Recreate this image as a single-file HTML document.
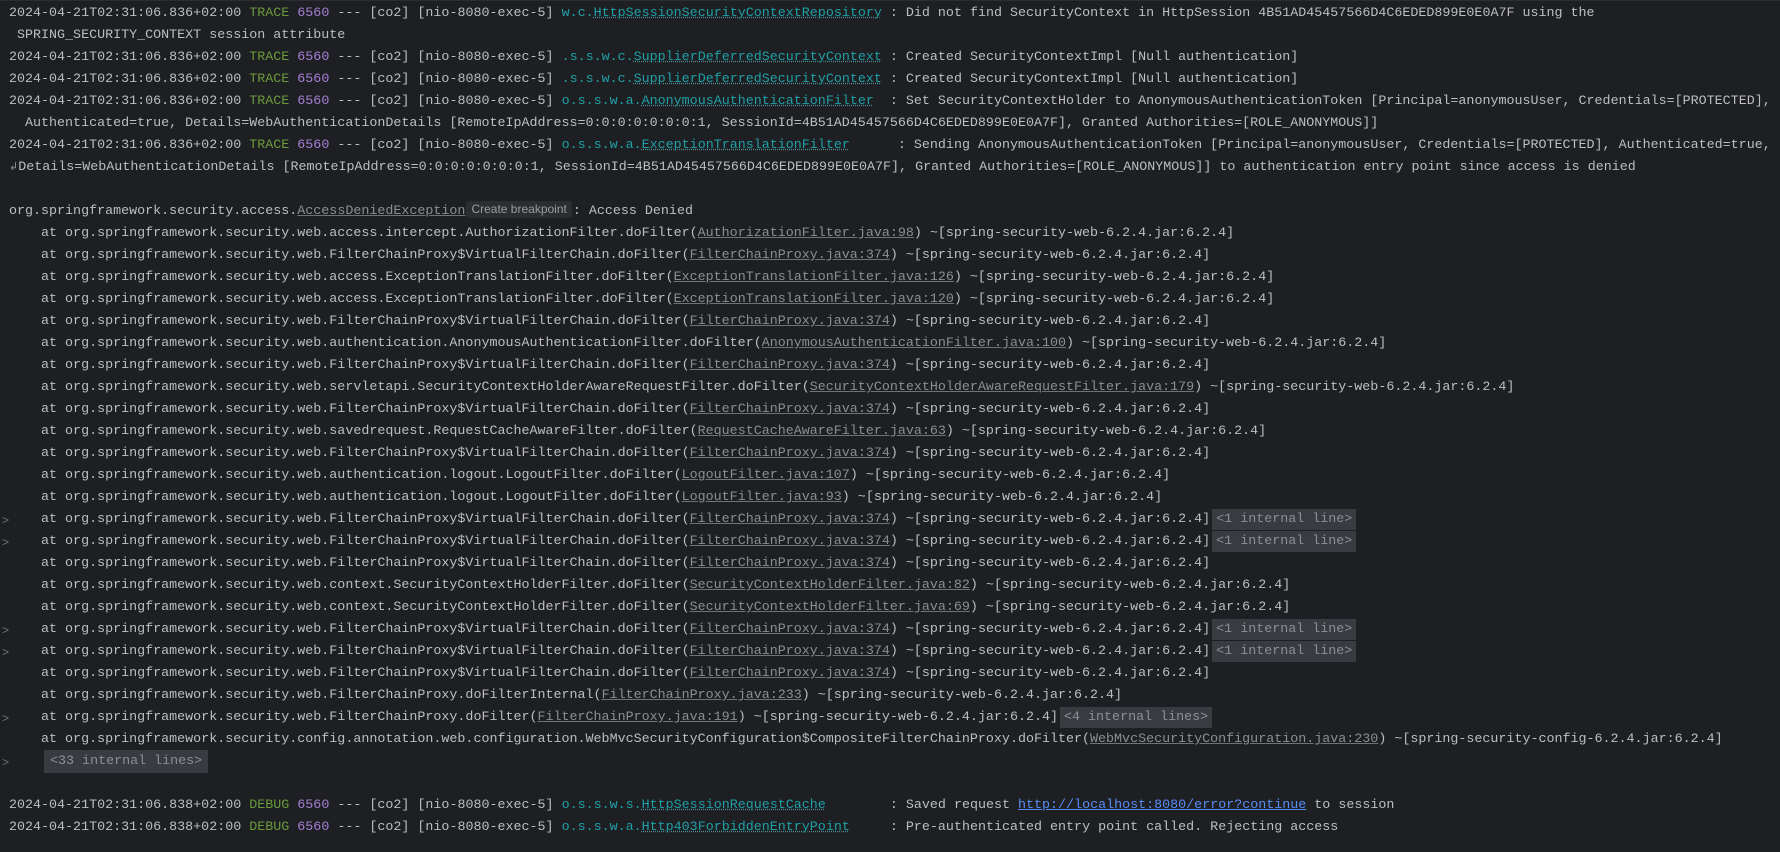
<!DOCTYPE html>
<html><head><meta charset="utf-8"><style>
html,body{margin:0;padding:0;background:#1e1f22;width:1780px;height:852px;overflow:hidden}
#c{position:absolute;left:9px;top:3px;font-family:"Liberation Mono",monospace;font-size:13.35px;line-height:22px;color:#bcbec4}
.r{height:22px;position:relative;white-space:pre}
.g{color:#6a9a3c}.p{color:#a67fd6}.t{color:#1fa0a6}
.t u{text-decoration:underline dotted #4f8f93}
.f{color:#8b8e94;text-decoration:underline;text-decoration-color:#6f7277}
.b{color:#5a8cf5;text-decoration:underline}
.i{background:#393b40;color:#8c8f94;padding:3px 4px;margin-left:2px}
.gt{position:absolute;left:-7px;color:#6f737a;font-family:"Liberation Sans",sans-serif;font-size:12px}
.bp{display:inline-block;background:#2b2d30;color:#9a9da2;font-family:"Liberation Sans",sans-serif;font-size:12px;line-height:17px;padding:0 5px;border-radius:3px;margin:0 1px;vertical-align:1px}
.top{position:absolute;left:0;top:0;width:1780px;height:1px;background:#2b2d30}
</style></head><body><div class="top"></div><div id="c">
<div class="r">2024-04-21T02:31:06.836+02:00 <span class="g">TRACE</span> <span class="p">6560</span> --- [co2] [nio-8080-exec-5] <span class="t">w.c.<u>HttpSessionSecurityContextRepository</u></span> : Did not find SecurityContext in HttpSession 4B51AD45457566D4C6EDED899E0E0A7F using the</div>
<div class="r"> SPRING_SECURITY_CONTEXT session attribute</div>
<div class="r">2024-04-21T02:31:06.836+02:00 <span class="g">TRACE</span> <span class="p">6560</span> --- [co2] [nio-8080-exec-5] <span class="t">.s.s.w.c.<u>SupplierDeferredSecurityContext</u></span> : Created SecurityContextImpl [Null authentication]</div>
<div class="r">2024-04-21T02:31:06.836+02:00 <span class="g">TRACE</span> <span class="p">6560</span> --- [co2] [nio-8080-exec-5] <span class="t">.s.s.w.c.<u>SupplierDeferredSecurityContext</u></span> : Created SecurityContextImpl [Null authentication]</div>
<div class="r">2024-04-21T02:31:06.836+02:00 <span class="g">TRACE</span> <span class="p">6560</span> --- [co2] [nio-8080-exec-5] <span class="t">o.s.s.w.a.<u>AnonymousAuthenticationFilter</u></span>  : Set SecurityContextHolder to AnonymousAuthenticationToken [Principal=anonymousUser, Credentials=[PROTECTED],</div>
<div class="r">  Authenticated=true, Details=WebAuthenticationDetails [RemoteIpAddress=0:0:0:0:0:0:0:1, SessionId=4B51AD45457566D4C6EDED899E0E0A7F], Granted Authorities=[ROLE_ANONYMOUS]]</div>
<div class="r">2024-04-21T02:31:06.836+02:00 <span class="g">TRACE</span> <span class="p">6560</span> --- [co2] [nio-8080-exec-5] <span class="t">o.s.s.w.a.<u>ExceptionTranslationFilter</u></span>      : Sending AnonymousAuthenticationToken [Principal=anonymousUser, Credentials=[PROTECTED], Authenticated=true, <span style="color:#8c8f94;font-size:11px">↗</span></div>
<div class="r"><span style="color:#8c8f94;font-size:11px">↲</span>Details=WebAuthenticationDetails [RemoteIpAddress=0:0:0:0:0:0:0:1, SessionId=4B51AD45457566D4C6EDED899E0E0A7F], Granted Authorities=[ROLE_ANONYMOUS]] to authentication entry point since access is denied</div>
<div class="r"> </div>
<div class="r">org.springframework.security.access.<span class="f">AccessDeniedException</span><span class="bp">Create breakpoint</span>: Access Denied</div>
<div class="r">    at org.springframework.security.web.access.intercept.AuthorizationFilter.doFilter(<span class="f">AuthorizationFilter.java:98</span>) ~[spring-security-web-6.2.4.jar:6.2.4]</div>
<div class="r">    at org.springframework.security.web.FilterChainProxy$VirtualFilterChain.doFilter(<span class="f">FilterChainProxy.java:374</span>) ~[spring-security-web-6.2.4.jar:6.2.4]</div>
<div class="r">    at org.springframework.security.web.access.ExceptionTranslationFilter.doFilter(<span class="f">ExceptionTranslationFilter.java:126</span>) ~[spring-security-web-6.2.4.jar:6.2.4]</div>
<div class="r">    at org.springframework.security.web.access.ExceptionTranslationFilter.doFilter(<span class="f">ExceptionTranslationFilter.java:120</span>) ~[spring-security-web-6.2.4.jar:6.2.4]</div>
<div class="r">    at org.springframework.security.web.FilterChainProxy$VirtualFilterChain.doFilter(<span class="f">FilterChainProxy.java:374</span>) ~[spring-security-web-6.2.4.jar:6.2.4]</div>
<div class="r">    at org.springframework.security.web.authentication.AnonymousAuthenticationFilter.doFilter(<span class="f">AnonymousAuthenticationFilter.java:100</span>) ~[spring-security-web-6.2.4.jar:6.2.4]</div>
<div class="r">    at org.springframework.security.web.FilterChainProxy$VirtualFilterChain.doFilter(<span class="f">FilterChainProxy.java:374</span>) ~[spring-security-web-6.2.4.jar:6.2.4]</div>
<div class="r">    at org.springframework.security.web.servletapi.SecurityContextHolderAwareRequestFilter.doFilter(<span class="f">SecurityContextHolderAwareRequestFilter.java:179</span>) ~[spring-security-web-6.2.4.jar:6.2.4]</div>
<div class="r">    at org.springframework.security.web.FilterChainProxy$VirtualFilterChain.doFilter(<span class="f">FilterChainProxy.java:374</span>) ~[spring-security-web-6.2.4.jar:6.2.4]</div>
<div class="r">    at org.springframework.security.web.savedrequest.RequestCacheAwareFilter.doFilter(<span class="f">RequestCacheAwareFilter.java:63</span>) ~[spring-security-web-6.2.4.jar:6.2.4]</div>
<div class="r">    at org.springframework.security.web.FilterChainProxy$VirtualFilterChain.doFilter(<span class="f">FilterChainProxy.java:374</span>) ~[spring-security-web-6.2.4.jar:6.2.4]</div>
<div class="r">    at org.springframework.security.web.authentication.logout.LogoutFilter.doFilter(<span class="f">LogoutFilter.java:107</span>) ~[spring-security-web-6.2.4.jar:6.2.4]</div>
<div class="r">    at org.springframework.security.web.authentication.logout.LogoutFilter.doFilter(<span class="f">LogoutFilter.java:93</span>) ~[spring-security-web-6.2.4.jar:6.2.4]</div>
<div class="r"><span class="gt">&gt;</span>    at org.springframework.security.web.FilterChainProxy$VirtualFilterChain.doFilter(<span class="f">FilterChainProxy.java:374</span>) ~[spring-security-web-6.2.4.jar:6.2.4]<span class="i">&lt;1 internal line&gt;</span></div>
<div class="r"><span class="gt">&gt;</span>    at org.springframework.security.web.FilterChainProxy$VirtualFilterChain.doFilter(<span class="f">FilterChainProxy.java:374</span>) ~[spring-security-web-6.2.4.jar:6.2.4]<span class="i">&lt;1 internal line&gt;</span></div>
<div class="r">    at org.springframework.security.web.FilterChainProxy$VirtualFilterChain.doFilter(<span class="f">FilterChainProxy.java:374</span>) ~[spring-security-web-6.2.4.jar:6.2.4]</div>
<div class="r">    at org.springframework.security.web.context.SecurityContextHolderFilter.doFilter(<span class="f">SecurityContextHolderFilter.java:82</span>) ~[spring-security-web-6.2.4.jar:6.2.4]</div>
<div class="r">    at org.springframework.security.web.context.SecurityContextHolderFilter.doFilter(<span class="f">SecurityContextHolderFilter.java:69</span>) ~[spring-security-web-6.2.4.jar:6.2.4]</div>
<div class="r"><span class="gt">&gt;</span>    at org.springframework.security.web.FilterChainProxy$VirtualFilterChain.doFilter(<span class="f">FilterChainProxy.java:374</span>) ~[spring-security-web-6.2.4.jar:6.2.4]<span class="i">&lt;1 internal line&gt;</span></div>
<div class="r"><span class="gt">&gt;</span>    at org.springframework.security.web.FilterChainProxy$VirtualFilterChain.doFilter(<span class="f">FilterChainProxy.java:374</span>) ~[spring-security-web-6.2.4.jar:6.2.4]<span class="i">&lt;1 internal line&gt;</span></div>
<div class="r">    at org.springframework.security.web.FilterChainProxy$VirtualFilterChain.doFilter(<span class="f">FilterChainProxy.java:374</span>) ~[spring-security-web-6.2.4.jar:6.2.4]</div>
<div class="r">    at org.springframework.security.web.FilterChainProxy.doFilterInternal(<span class="f">FilterChainProxy.java:233</span>) ~[spring-security-web-6.2.4.jar:6.2.4]</div>
<div class="r"><span class="gt">&gt;</span>    at org.springframework.security.web.FilterChainProxy.doFilter(<span class="f">FilterChainProxy.java:191</span>) ~[spring-security-web-6.2.4.jar:6.2.4]<span class="i">&lt;4 internal lines&gt;</span></div>
<div class="r">    at org.springframework.security.config.annotation.web.configuration.WebMvcSecurityConfiguration$CompositeFilterChainProxy.doFilter(<span class="f">WebMvcSecurityConfiguration.java:230</span>) ~[spring-security-config-6.2.4.jar:6.2.4]</div>
<div class="r"><span class="gt">&gt;</span>    <span class="i" style="margin-left:3px;padding:4px 6px">&lt;33 internal lines&gt;</span></div>
<div class="r"> </div>
<div class="r">2024-04-21T02:31:06.838+02:00 <span class="g">DEBUG</span> <span class="p">6560</span> --- [co2] [nio-8080-exec-5] <span class="t">o.s.s.w.s.<u>HttpSessionRequestCache</u></span>        : Saved request <span class="b">http://localhost:8080/error?continue</span> to session</div>
<div class="r">2024-04-21T02:31:06.838+02:00 <span class="g">DEBUG</span> <span class="p">6560</span> --- [co2] [nio-8080-exec-5] <span class="t">o.s.s.w.a.<u>Http403ForbiddenEntryPoint</u></span>     : Pre-authenticated entry point called. Rejecting access</div>
</div></body></html>
